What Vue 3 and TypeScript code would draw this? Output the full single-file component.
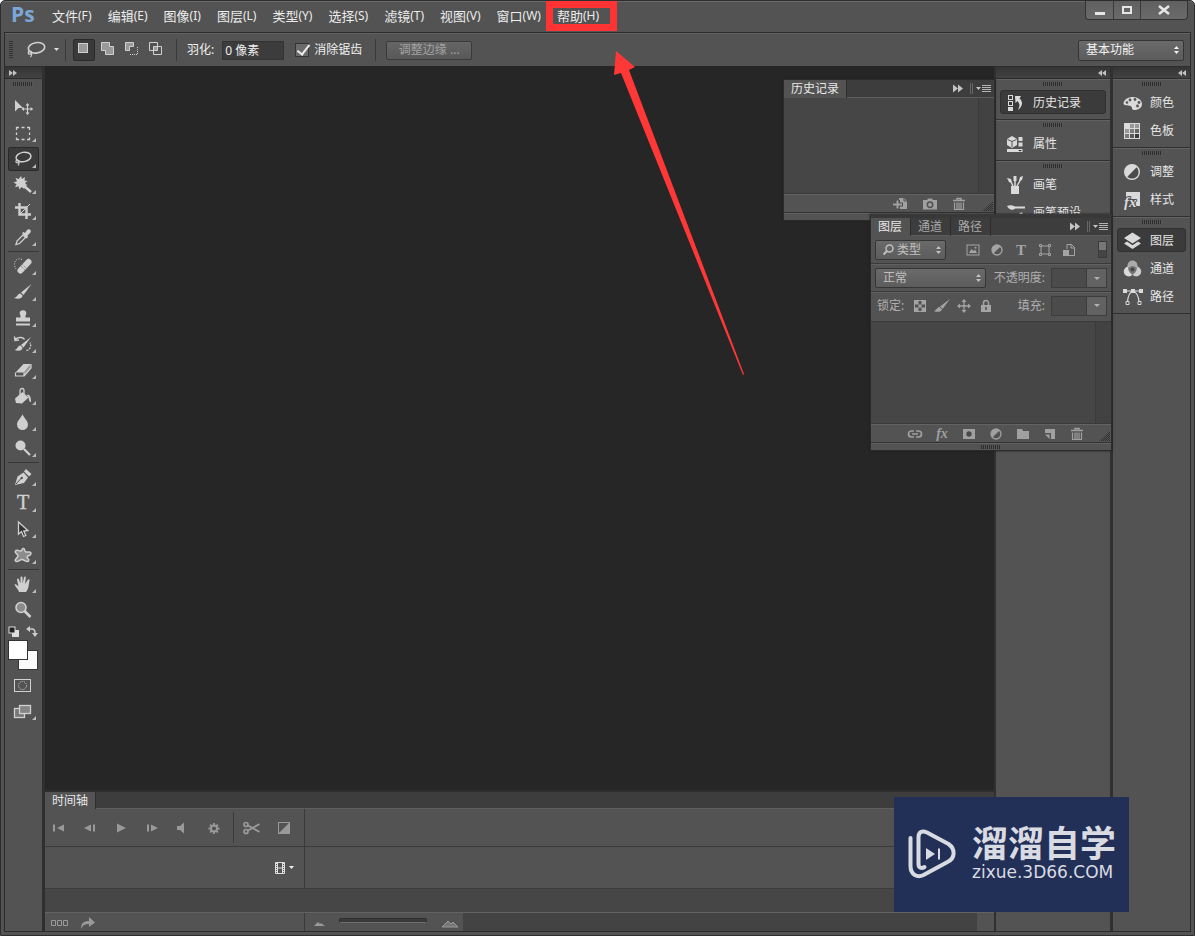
<script setup lang="ts">
import { ref } from 'vue'

interface Tool { id: string; label: string; flyout: boolean }
interface Entry { icon: string; label: string }

const menus: [string, string][] = [
  ['文件', 'F'], ['编辑', 'E'], ['图像', 'I'], ['图层', 'L'], ['类型', 'Y'],
  ['选择', 'S'], ['滤镜', 'T'], ['视图', 'V'], ['窗口', 'W'], ['帮助', 'H'],
]

const t = (id: string, label: string, flyout = true): Tool => ({ id, label, flyout })
const toolGroups: Tool[][] = [
  [t('move', '移动', false), t('marquee', '选框'), t('lasso', '套索'), t('wand', '魔棒'), t('crop', '裁剪'), t('eyedropper', '吸管')],
  [t('heal', '修复'), t('brush', '画笔'), t('stamp', '图章'), t('historyBrush', '历史画笔'), t('eraser', '橡皮擦'), t('bucket', '油漆桶'), t('blur', '模糊'), t('dodge', '减淡')],
  [t('pen', '钢笔'), t('type', '文字'), t('pathSelect', '路径选择'), t('shape', '形状')],
  [t('hand', '抓手'), t('zoom', '缩放', false)],
]

const innerDock: Entry[][] = [
  [{ icon: 'dHistory', label: '历史记录' }],
  [{ icon: 'dProps', label: '属性' }],
  [{ icon: 'dBrushes', label: '画笔' }, { icon: 'dPresets', label: '画笔预设' }],
]
const outerDock: Entry[][] = [
  [{ icon: 'dColor', label: '颜色' }, { icon: 'dSwatches', label: '色板' }],
  [{ icon: 'dAdjust', label: '调整' }, { icon: 'dStyles', label: '样式' }],
  [{ icon: 'dLayers', label: '图层' }, { icon: 'dChannels', label: '通道' }, { icon: 'dPaths', label: '路径' }],
]
const selectionModes = ['modeNew', 'modeAdd', 'modeSub', 'modeInt']
const historyFooter = ['docNew', 'camera', 'trash']
const layerFooter = ['link', 'fx', 'mask', 'adjust', 'folder', 'newLayer', 'trash']
const filterIcons = ['image', 'adjust', 'typeSmall', 'shapeSmall', 'smart']
const lockIcons = ['checker', 'brushSmall', 'moveSmall', 'lock']
const transport = ['first', 'prev', 'play', 'next', 'sound', 'gear']

const feather = ref('0 像素')
const antialias = ref(true)
const activeTool = ref('lasso')
const activeMode = ref('modeNew')
const zoomLevel = ref(0)

const trash = '<path d="M2 4.500h12M6 4V2.500h4V4" fill="none" stroke="currentColor" stroke-width="1.500"/><path d="M3.500 6.500v7h9v-7M6 6.500v7M8 6.500v7M10 6.500v7" fill="none" stroke="currentColor" stroke-width="1.200"/>'
const adjust = '<circle cx="8" cy="8" r="5" fill="none" stroke="currentColor" stroke-width="1.300"/><path d="M4.400 11.600A5 5 0 0 1 11.600 4.400z" fill="currentColor"/>'

/* Tool drawings use a 20-unit box, the others a 16-unit or 20-unit box. */
const icons: Record<string, string> = {
  move: '<path d="M2 3v11.500l3.500-3.500H10z" fill="currentColor"/><path d="M14.500 7v10M9.500 12h10" stroke="currentColor" stroke-width="1.200"/><path d="M14.500 6l2 2.500h-4zM14.500 18l2-2.500h-4zM8.500 12l2.500-2v4zM20 12l-2.500-2v4z" fill="currentColor"/>',
  marquee: '<path d="M3.500 7V4.500H6M8.500 4.500h3M14 4.500h2.500V7M16.500 9.500v2.500M16.500 14.500v2H14M11.500 16.500h-3M6 16.500H3.500v-2M3.500 12V9.500" fill="none" stroke="currentColor" stroke-width="1.300"/>',
  lasso: '<ellipse cx="10.500" cy="8" rx="7.500" ry="4.700" transform="rotate(-10 10.500 8)" fill="none" stroke="currentColor" stroke-width="1.500"/><path d="M4 11c-2 1-1 3.500 1 2.500s1-2.500-1-2.500c2 1 3 3 1 5.500" fill="none" stroke="currentColor" stroke-width="1.200"/>',
  wand: '<path d="M10 10l8 7" stroke="currentColor" stroke-width="2.500"/><path d="M8 1l1 3 3-2-.5 3.500 3 .5-2.500 2 2.500 2.500-3.500.2.500 3.300-3-2-2 2.500-1-3.200-3.500 1 1.500-3L.5 7.500l3.500-1.200L2.500 3l3.300 1z" fill="currentColor"/>',
  crop: '<path d="M6.500 2v11.500H18M2 6.500h11.500V18" fill="none" stroke="currentColor" stroke-width="2.400"/><path d="M6 14L17 3" stroke="currentColor" stroke-width="1"/>',
  eyedropper: '<path d="M3 17.500l1-3.500 6-6 2.500 2.500-6 6z" fill="none" stroke="currentColor" stroke-width="1.300"/><path d="M9 6l1.500-1 1.500 1 2-3c2-2 5 0 3.500 2.500l-3 3 .5 1.500-1.500 1.500z" fill="currentColor"/>',
  heal: '<path d="M7.500 14.500L15.500 6" stroke="currentColor" stroke-width="6" stroke-linecap="round"/><path d="M9.500 8.500l4 4M8 10l4 4" stroke="#777" stroke-dasharray="1 1"/><path d="M9 3.500C5 1.500 1.500 4 1.500 8.500c0 2 .500 3 1.500 4.500" fill="none" stroke="currentColor" stroke-dasharray="1 1.500"/>',
  brush: '<path d="M18.500 2L8 10.500l2.500 2.500z" fill="currentColor"/><path d="M7.500 11.500c-3 0-3 3.500-6.500 4.500 3.500 1.500 8.500 1 8.500-2.500z" fill="currentColor"/>',
  stamp: '<path d="M7.500 9.500c.5-2-.8-2.500-.8-4a3.300 3.300 0 0 1 6.600 0c0 1.500-1.300 2-.8 4H17v4H3v-4z" fill="currentColor"/><path d="M3 16.500h14" stroke="currentColor" stroke-width="2"/>',
  historyBrush: '<path d="M18 3L8 11l2.500 2.500z" fill="currentColor"/><path d="M7.500 11.500c-3 0-2.500 3.500-6 4.500 3.500 1.500 8 1 8-2.500z" fill="currentColor"/><path d="M2.500 5c4-2.500 8-1.500 9 .500M1.500 2.500L2 6.500 6 6" fill="none" stroke="currentColor" stroke-width="1.500"/><path d="M13.500 16.500c4-1 5-5 3.500-8" fill="none" stroke="currentColor" stroke-width="1.300" stroke-dasharray="2 1"/>',
  eraser: '<path d="M2.500 12.500L10.500 4H18l-7 8.500z" fill="currentColor"/><path d="M11 12.500L18 4v4l-7 8z" fill="#9a9a9a"/><path d="M2.500 12.500v3.500h8.500V12.500M18 4v4L11 16" fill="none" stroke="currentColor" stroke-width="1.200"/>',
  bucket: '<path d="M2 12.500L9.500 6l6 5.500L9 17.500 3 17z" fill="currentColor"/><path d="M7 11V4.500a2 2 0 0 1 4 0V9" fill="none" stroke="currentColor" stroke-width="1.300"/><path d="M13.500 8.500c4 0 4.500 3 4.500 7.500-2 0-2-2.500-2.500-4.500z" fill="currentColor"/>',
  blur: '<path d="M9.500 2c.500 3 5.500 6.500 5.500 10.500a5.500 5.500 0 0 1-11 0C4 8.500 9 5 9.500 2z" fill="currentColor"/>',
  dodge: '<circle cx="7.500" cy="7.500" r="5" fill="currentColor"/><path d="M11 11l6 6" stroke="currentColor" stroke-width="2.200"/>',
  pen: '<path d="M2 18l2.500-8.500 6-4 4.500 5-4 5.500z" fill="currentColor"/><path d="M11 4.500l2-2.500 5.500 5-2.500 2.500z" fill="currentColor"/><path d="M3 17l5-5.500" stroke="#505050"/><circle cx="8.700" cy="11" r="1.200" fill="#505050"/>',
  type: '<text x="10" y="16" text-anchor="middle" font-family="Liberation Serif, serif" font-size="20" fill="currentColor" stroke="currentColor" stroke-width=".4">T</text>',
  pathSelect: '<path d="M5.500 3v12l3-2.500 2 5 2.300-1-2-4.500 4-.500z" fill="#303030" stroke="currentColor" stroke-width="1.300"/>',
  shape: '<path d="M10 3.500c2.500-.5 1 3 3 3.500s5-1 5 1.500-4 2-4 3.500 3 2 1.500 4-4.500-1.500-6.500-1.500-5 3.500-6.500 1.500 3-3.500 2.500-5.500-4-2.500-2.500-4.500 4 .5 5.500 0 .5-2 2-2.500z" fill="#8c8c8c" stroke="currentColor" stroke-width="1.500"/>',
  hand: '<path d="M6 18c-.5-3-4-5-4.500-7.500 1.500-1 2.500.500 4 2L4 5.500c0-1.500 1.500-1.500 2 0L7.500 9.500V3.500c0-1.500 2-1.500 2 0v6l1.500-6c.5-1.500 2-1 1.800.4L12 10l2.700-4c.8-1.300 2.200-.5 1.800.700-1 3.800-.5 7.800-3.500 11.300z" fill="currentColor"/>',
  zoom: '<circle cx="8" cy="7.500" r="5" fill="#8a8a8a" stroke="currentColor" stroke-width="1.600"/><path d="M11.500 11l6 6" stroke="currentColor" stroke-width="2.600"/>',
  quickMask: '<rect x="1.500" y="4.500" width="16" height="12" fill="none" stroke="currentColor"/><circle cx="9.500" cy="10.500" r="4" fill="none" stroke="currentColor" stroke-dasharray="1 1"/>',
  screen: '<rect x="1.500" y="7.500" width="10" height="9" fill="#777" stroke="currentColor" stroke-width="1.300"/><rect x="6.500" y="4.500" width="11" height="8" fill="#858585" stroke="currentColor" stroke-width="1.300"/>',
  modeNew: '<rect x="2.500" y="2.500" width="9" height="9" fill="#999" stroke="currentColor"/>',
  modeAdd: '<path d="M1.500 1.500h8v4h4v8h-8v-4h-4z" fill="#999" stroke="currentColor"/>',
  modeSub: '<path d="M1.500 1.500h8v4h-4v4h-4z" fill="#999" stroke="currentColor"/><path d="M6 13.500h7.500V6" fill="none" stroke="currentColor" stroke-dasharray="1 1"/>',
  modeInt: '<path d="M1.500 1.500h8v8h-8zM5.500 5.500h8v8h-8z" fill="none" stroke="currentColor"/><rect x="6" y="6" width="3" height="3" fill="#999"/>',
  dHistory: '<rect x="2.500" y="2.500" width="4" height="4" fill="none" stroke="currentColor"/><rect x="2.500" y="8.500" width="4" height="4" fill="none" stroke="currentColor"/><rect x="2" y="14" width="5" height="4" fill="currentColor"/><path d="M9 3h6l-1.500 2.500c4 3 3 8-1.500 11.500 2-4 2-6-.5-9L9.500 10z" fill="currentColor"/>',
  dProps: '<path d="M1 5l5-3 5 3v6l-5 3-5-3z" fill="currentColor"/><path d="M1.500 5.500l4.500 2 4.500-2M6 7.500V13" fill="none" stroke="#555"/><path d="M12.500 3h4v4h-4zM12.500 8.500h4v4h-4zM1 15h15.500v3H1z" fill="currentColor"/><path d="M12 16h4l-2 1.500z" fill="#333"/>',
  dBrushes: '<path d="M5 11h8v8H5z" fill="currentColor"/><path d="M7 11L4 5M9 11V4M11 11l4-7" stroke="currentColor" stroke-width="1.500"/><path d="M1 3l4 1 1 4-3-1zM7.500 1h3v5h-3zM13 6l1-4 3-1-1 4z" fill="currentColor"/>',
  dPresets: '<path d="M1 3c4-2 8 0 9 1.500C7 8.500 3 7 1 3z" fill="currentColor"/><path d="M9 4.500h10M8 13.500h10" stroke="currentColor" stroke-width="2"/><path d="M11 12l5-3 1 3z" fill="currentColor"/>',
  dColor: '<path d="M.500 10c1-4 5-6 9.500-6s9 3 9 7-4 6-8 6c-3 0-1-3-3.500-4S0 13 .500 10z" fill="currentColor"/><g fill="#555"><circle cx="7" cy="7" r="1.400"/><circle cx="12" cy="6.500" r="1.400"/><circle cx="16" cy="9.500" r="1.400"/><circle cx="14.500" cy="13" r="1.400"/><circle cx="4" cy="9.500" r="1.300"/></g>',
  dSwatches: '<path d="M1 2h16v16H1z" fill="#999"/><path d="M2 3h4v4H2z" fill="#ddd"/><path d="M7 8h4v4H7zM2 13h4v4H2z" fill="#7a7a7a"/><path d="M12 8h4v4h-4z" fill="#666"/><path d="M7 13h4v4H7z" fill="#5a5a5a"/><path d="M12 13h4v4h-4z" fill="#3a3a3a"/><path d="M6.500 2v16M11.500 2v16M1 7.500h16M1 12.500h16" stroke="currentColor"/><rect x="1.500" y="2.500" width="15" height="15" fill="none" stroke="currentColor"/>',
  dAdjust: '<circle cx="9" cy="10" r="7.300" fill="#4b4b4b" stroke="currentColor" stroke-width="1.400"/><path d="M3.800 15.200A7.300 7.300 0 0 1 14.200 4.800z" fill="currentColor"/>',
  dStyles: '<path d="M3 2h14v14h-4l-1-7H3z" fill="currentColor"/><text x="1" y="17" font-family="Liberation Serif, serif" font-style="italic" font-weight="bold" font-size="15" fill="currentColor" stroke="#505050" stroke-width="2" paint-order="stroke">fx</text>',
  dLayers: '<path d="M9.500 1.500L18 7l-8.500 5.500L1 7z" fill="currentColor"/><path d="M1 12.500l3-2 5.500 3.800 5.500-3.800 3 2L9.500 18z" fill="currentColor"/>',
  dChannels: '<circle cx="9.500" cy="6.500" r="5" fill="#aaa"/><circle cx="5.800" cy="12.500" r="5" fill="currentColor"/><circle cx="13.200" cy="12.500" r="5" fill="#ccc"/><path d="M5 8.500c3-2 6-2 9 0 0 3-2 5.500-4.500 7.500C7 14 5 11.500 5 8.500z" fill="#777"/><circle cx="9.500" cy="10.500" r="2" fill="#444"/>',
  dPaths: '<path d="M1 4h18M4.500 15C5 8 7 5 10 4c3 1 5.500 4 6 11" fill="none" stroke="currentColor" stroke-width="1.200"/><path d="M0 2h4v4H0zM8 2h4v4H8zM16 2h4v4h-4z" fill="currentColor"/><path d="M3 14.500h3v3H3zM15 14.500h3v3h-3z" fill="#505050" stroke="currentColor"/>',
  link: '<path d="M7 5H4.500a3 3 0 0 0 0 6H7M9 5h2.500a3 3 0 0 1 0 6H9M5 8h6" fill="none" stroke="currentColor" stroke-width="1.700"/>',
  fx: '<text x="8" y="12" text-anchor="middle" font-family="Liberation Serif, serif" font-style="italic" font-weight="bold" font-size="14" fill="currentColor">fx</text>',
  mask: '<path d="M2 3h12v10H2z" fill="currentColor"/><circle cx="8" cy="8" r="2.700" fill="#4a4a4a"/>',
  adjust, trash,
  folder: '<path d="M2 3h5l1 2h6v8H2z" fill="currentColor"/>',
  newLayer: '<path d="M3 3h10v10H9V7H3z" fill="currentColor"/><path d="M3 8.500h4.500V13z" fill="currentColor"/>',
  image: '<rect x="2" y="3" width="12" height="10" fill="none" stroke="currentColor"/><path d="M4 11l2.500-4 2 2 1.500-1.500L12 11z" fill="currentColor"/><circle cx="10.500" cy="5.700" r="1" fill="currentColor"/>',
  typeSmall: '<text x="8" y="13" text-anchor="middle" font-family="Liberation Serif, serif" font-weight="bold" font-size="15" fill="currentColor">T</text>',
  shapeSmall: '<path d="M4 4h8v8H4z" fill="none" stroke="currentColor"/><path d="M2.500 2.500h2v2h-2zM11.500 2.500h2v2h-2zM2.500 11.500h2v2h-2zM11.500 11.500h2v2h-2z" fill="#505050" stroke="currentColor"/>',
  smart: '<path d="M6 7V2.500h4.500L13.500 5.500v8H8" fill="none" stroke="currentColor"/><path d="M10 2v4h4" fill="none" stroke="currentColor"/><path d="M2 8h6v6H2z" fill="currentColor"/>',
  checker: '<rect x="2.500" y="2.500" width="11" height="11" fill="none" stroke="currentColor"/><path d="M3 3h3.500v3.500H3zM9.500 3H13v3.500H9.500zM6.500 6.500h3v3h-3zM3 9.500h3.500V13H3zM9.500 9.500H13V13H9.500z" fill="currentColor"/>',
  brushSmall: '<path d="M16 1L6 8.500 8.500 11z" fill="currentColor"/><path d="M5.500 9C3 9 3 12 0 13c3 1.500 7.500 1 8-1.500z" fill="currentColor"/>',
  moveSmall: '<path d="M8 3v10M3 8h10" stroke="currentColor" stroke-width="1.300"/><path d="M8 1l2.500 3h-5zM8 15l2.500-3h-5zM1 8l3-2.500v5zM15 8l-3-2.500v5z" fill="currentColor"/>',
  lock: '<path d="M3 7h10v7H3z" fill="currentColor"/><path d="M5.500 7V5a2.500 2.500 0 0 1 5 0v2" fill="none" stroke="currentColor" stroke-width="1.500"/><path d="M8 9v3" stroke="#505050" stroke-width="1.500"/>',
  docNew: '<path d="M6 2h5l3 3v8H6z" fill="currentColor"/><path d="M11 2v3h3" fill="none" stroke="#505050"/><path d="M0 8.500h10M5 4v9" stroke="#505050" stroke-width="4"/><path d="M0 8.500h9M4.500 4.500v8" stroke="currentColor" stroke-width="2"/>',
  camera: '<path d="M1 4h4l1-1.500h4L11 4h4v9.500H1z" fill="currentColor"/><circle cx="8" cy="8.700" r="2.700" fill="none" stroke="#505050" stroke-width="1.500"/>',
  first: '<path d="M3 4.500v7" stroke="currentColor" stroke-width="2"/><path d="M13 4.500v7L6 8z" fill="currentColor"/>',
  prev: '<path d="M9 4.500v7L2 8z" fill="currentColor"/><path d="M12 4.500v7" stroke="currentColor" stroke-width="2"/>',
  play: '<path d="M4 3.500v9L13 8z" fill="currentColor"/>',
  next: '<path d="M4 4.500v7" stroke="currentColor" stroke-width="2"/><path d="M7 4.500v7L14 8z" fill="currentColor"/>',
  sound: '<path d="M2 6h3l4-3.500v11L5 10H2z" fill="currentColor"/>',
  gear: '<circle cx="8" cy="8.500" r="3" fill="none" stroke="currentColor" stroke-width="1.800"/><path d="M8 3v2M8 12v2M2.500 8.500h2M11.500 8.500h2M4.100 4.600l1.400 1.400M10.500 11l1.400 1.400M4.100 12.400L5.500 11M10.500 6l1.400-1.400" stroke="currentColor" stroke-width="1.800"/>',
  scissors: '<circle cx="3" cy="4.500" r="2" fill="none" stroke="currentColor" stroke-width="1.700"/><circle cx="3" cy="11.500" r="2" fill="none" stroke="currentColor" stroke-width="1.700"/><path d="M5 5.500l11.500 6.500M5 10.500L16.500 4" stroke="currentColor" stroke-width="1.800"/>',
  transition: '<rect x="2.500" y="2.500" width="11" height="11" fill="none" stroke="currentColor"/><path d="M13 3v10H3z" fill="currentColor"/>',
  film: '<path d="M3.500 2.500h9v11h-9zM5.500 3v10M10.500 3v10M5.500 8h5" fill="none" stroke="currentColor"/><path d="M4.500 3v10M11.500 3v10" stroke="currentColor" stroke-dasharray="1 1"/>',
}
</script>

<template>
  <div class="window">
    <header class="titlebar">
      <span class="logo">Ps</span>
      <nav class="menus">
        <button v-for="[name, key] in menus" :key="key" class="menu" type="button">
          {{ name }}<span class="mnemonic">({{ key }})</span>
          <i v-if="key === 'H'" class="highlight"></i>
        </button>
      </nav>
      <div class="winbuttons">
        <button type="button" aria-label="最小化"><svg width="12" height="12"><path d="M1 8h10v3H1z" fill="#e6e6e6" /></svg></button>
        <button type="button" aria-label="最大化"><svg width="12" height="12"><rect x="2" y="3" width="8" height="6" fill="none" stroke="#e6e6e6" stroke-width="2" /></svg></button>
        <button type="button" class="close" aria-label="关闭"><svg width="12" height="12"><path d="M1 2l10 8M11 2L1 10" stroke="#e6e6e6" stroke-width="2.500" /></svg></button>
      </div>
    </header>

    <div class="shell">
      <section class="options">
        <i class="vgrip"></i>
        <button class="current" type="button" aria-label="当前工具">
          <svg width="22" height="22" viewBox="0 0 20 20" v-html="icons.lasso"></svg>
          <svg class="caret" width="7" height="4"><path d="M1 0h5L3.500 3z" fill="#e0e0e0" /></svg>
        </button>
        <i class="bar"></i>
        <div class="modes">
          <button v-for="m in selectionModes" :key="m" type="button" :aria-label="m" :class="{ on: m === activeMode }" @click="activeMode = m">
            <svg width="15" height="15" v-html="icons[m]"></svg>
          </button>
        </div>
        <i class="bar"></i>
        <label class="feather">羽化: <input v-model="feather" type="text" /></label>
        <label class="check"><input v-model="antialias" type="checkbox" />消除锯齿</label>
        <i class="bar"></i>
        <button class="refine" type="button" disabled>调整边缘 ...</button>
        <div class="select workspace-select">
          <select aria-label="工作区"><option>基本功能</option></select>
          <svg width="5" height="8"><path d="M2.500 0L5 3H0zM2.500 8L5 5H0z" fill="currentColor" /></svg>
        </div>
      </section>

      <main class="workspace">
        <aside class="tools">
          <div class="dockhead left"><svg width="8" height="6"><path d="M0 0v6l4-3zM4 0v6l4-3z" fill="#c0c0c0" /></svg></div>
          <i class="grip"></i>
          <div v-for="(group, gi) in toolGroups" :key="gi" class="toolgroup">
            <button v-for="tool in group" :key="tool.id" type="button" class="tool" :class="{ on: tool.id === activeTool }" :aria-label="tool.label" @click="activeTool = tool.id">
              <svg width="20" height="20" v-html="icons[tool.id]"></svg>
              <i v-if="tool.flyout" class="corner"></i>
            </button>
          </div>
          <div class="miniswatches">
            <svg width="11" height="11"><rect x="4" y="4" width="7" height="7" fill="#ddd" /><rect x="1" y="1" width="6" height="6" fill="#222" stroke="#ddd" /></svg>
            <svg width="12" height="11"><path d="M3 3h3q3 0 3 4" fill="none" stroke="#ccc" stroke-width="1.500" /><path d="M4 0v6L0 3zM6 7h6l-3 4z" fill="#ccc" /></svg>
          </div>
          <svg class="colors" width="31" height="33"><rect x="10.500" y="11.500" width="19" height="19" fill="#fafafa" stroke="#333" /><rect x=".5" y="1.500" width="19" height="19" fill="#fff" stroke="#333" /></svg>
          <div class="toolmodes">
            <button class="tool" type="button" aria-label="快速蒙版"><svg width="20" height="20" v-html="icons.quickMask"></svg></button>
            <button class="tool" type="button" aria-label="屏幕模式"><svg width="20" height="20" v-html="icons.screen"></svg><i class="corner"></i></button>
          </div>
        </aside>

        <div class="center">
          <div class="canvas"></div>
          <section class="timeline">
            <div class="tabs">
              <button class="tab on" type="button">时间轴</button>
              <span class="panelmenu"><svg width="15" height="10"><path d="M0 3h5L2.500 6z" fill="#bbb" /><path d="M6 3.500h9M6 5.500h9M6 7.500h9" stroke="#bbb" /></svg></span>
            </div>
            <div class="trow controls">
              <div class="side">
                <div class="transport">
                  <button v-for="b in transport" :key="b" type="button" :aria-label="b"><svg width="16" height="16" v-html="icons[b]"></svg></button>
                </div>
                <div class="edit">
                  <button type="button" aria-label="拆分"><svg width="17" height="16" v-html="icons.scissors"></svg></button>
                  <button type="button" aria-label="过渡"><svg width="16" height="16" v-html="icons.transition"></svg></button>
                </div>
              </div>
            </div>
            <div class="trow media">
              <div class="side">
                <button type="button" aria-label="添加媒体"><svg width="16" height="16" v-html="icons.film"></svg><svg width="7" height="4"><path d="M1 0h5L3.500 3z" fill="#eee" /></svg></button>
              </div>
            </div>
            <div class="tempty"></div>
            <div class="tfoot">
              <div class="side">
                <svg width="18" height="7"><path d="M.5.500h4v5h-4zM6.500.500h4v5h-4zM12.500.500h4v5h-4z" fill="none" stroke="#9a9a9a" /></svg>
                <svg width="14" height="12"><path d="M0 12C0 6 3 4 8 4V0l6 5.500L8 10V7C4 7 2 8 0 12z" fill="#9a9a9a" /></svg>
              </div>
              <div class="zoombar">
                <svg width="11" height="6"><path d="M0 6l4-4 2 2 1-1 4 3z" fill="#9a9a9a" /></svg>
                <input v-model="zoomLevel" type="range" aria-label="时间轴缩放" />
                <svg width="18" height="9"><path d="M1 8l6-6 3 3 2-2 5 5z" fill="#777" stroke="#9a9a9a" /></svg>
              </div>
              <div class="hscroll"></div>
            </div>
          </section>
        </div>

        <aside class="dock inner">
          <div class="dockhead"><svg width="8" height="6"><path d="M4 0v6L0 3zM8 0v6L4 3z" fill="#c0c0c0" /></svg></div>
          <div v-for="(group, gi) in innerDock" :key="gi" class="dockgroup">
            <i class="grip"></i>
            <button v-for="e in group" :key="e.label" type="button" class="entry" :class="{ on: e.label === '历史记录' }">
              <svg width="20" height="20" v-html="icons[e.icon]"></svg>{{ e.label }}
            </button>
          </div>
        </aside>
        <aside class="dock outer">
          <div class="dockhead"><svg width="8" height="6"><path d="M4 0v6L0 3zM8 0v6L4 3z" fill="#c0c0c0" /></svg></div>
          <div v-for="(group, gi) in outerDock" :key="gi" class="dockgroup">
            <i class="grip"></i>
            <button v-for="e in group" :key="e.label" type="button" class="entry" :class="{ on: e.label === '图层' }">
              <svg width="20" height="20" v-html="icons[e.icon]"></svg>{{ e.label }}
            </button>
          </div>
        </aside>

        <section class="panel history">
          <div class="tabs">
            <button class="tab on" type="button">历史记录</button>
            <span class="panelmenu">
              <svg width="38" height="11"><path d="M0 1.500v8l5-4zM5 1.500v8l5-4z" fill="#c4c4c4" /><path d="M17.500 0v11M19.500 0v11" stroke="#666" /><path d="M23 4h5l-2.500 3z" fill="#c4c4c4" /><path d="M29 2.500h9M29 4.500h9M29 6.500h9M29 8.500h9" stroke="#b4b4b4" /></svg>
            </span>
          </div>
          <div class="body"><i class="scroll"></i></div>
          <div class="foot">
            <button v-for="b in historyFooter" :key="b" type="button" :aria-label="b"><svg width="16" height="16" v-html="icons[b]"></svg></button>
            <i class="resize"></i>
          </div>
          <div class="strip"></div>
        </section>

        <section class="panel layers">
          <div class="tabs">
            <button class="tab on" type="button">图层</button>
            <button class="tab" type="button">通道</button>
            <button class="tab" type="button">路径</button>
            <span class="panelmenu">
              <svg width="38" height="11"><path d="M0 1.500v8l5-4zM5 1.500v8l5-4z" fill="#c4c4c4" /><path d="M17.500 0v11M19.500 0v11" stroke="#666" /><path d="M23 4h5l-2.500 3z" fill="#c4c4c4" /><path d="M29 2.500h9M29 4.500h9M29 6.500h9M29 8.500h9" stroke="#b4b4b4" /></svg>
            </span>
          </div>
          <div class="prow">
            <div class="select kind">
              <svg class="search" width="11" height="11"><circle cx="6.500" cy="4.500" r="3.500" fill="none" stroke="currentColor" stroke-width="1.500" /><path d="M4 7l-3.500 3.500" stroke="currentColor" stroke-width="2" /></svg>
              <select aria-label="筛选类型"><option>类型</option></select>
              <svg width="5" height="8"><path d="M2.500 0L5 3H0zM2.500 8L5 5H0z" fill="currentColor" /></svg>
            </div>
            <div class="filters">
              <button v-for="b in filterIcons" :key="b" type="button" :aria-label="b"><svg width="16" height="16" v-html="icons[b]"></svg></button>
            </div>
            <button class="toggle" type="button" aria-label="筛选开关"></button>
          </div>
          <div class="prow">
            <div class="select blend">
              <select aria-label="混合模式"><option>正常</option></select>
              <svg width="5" height="8"><path d="M2.500 0L5 3H0zM2.500 8L5 5H0z" fill="currentColor" /></svg>
            </div>
            <label class="amount">不透明度:<input type="text" /><i></i></label>
          </div>
          <div class="prow last">
            <span>锁定:</span>
            <div class="locks">
              <button v-for="b in lockIcons" :key="b" type="button" :aria-label="b"><svg width="16" height="16" v-html="icons[b]"></svg></button>
            </div>
            <label class="amount">填充:<input type="text" /><i></i></label>
          </div>
          <div class="body"><i class="scroll"></i></div>
          <div class="foot">
            <button v-for="b in layerFooter" :key="b" type="button" :aria-label="b"><svg width="16" height="16" v-html="icons[b]"></svg></button>
            <i class="resize"></i>
          </div>
          <div class="strip"><i class="grip"></i></div>
        </section>
      </main>
    </div>

    <svg class="arrow" width="136" height="328"><path d="M6 1L25 17l-6 3 115 304-1 1L11 23l-7 2z" fill="#fe3737" /></svg>

    <div class="watermark">
      <svg width="50" height="52" viewBox="0 0 50 52">
        <path d="M3.500 9v28c0 9 7 12 13 9l24-13c8-4 8-13 1-18L20 3.500C15 1 11.500 3 11.500 8v27c0 4 3 5 6 3" fill="none" stroke="#d9dbe2" stroke-width="4" stroke-linecap="round" stroke-linejoin="round" />
        <path d="M19 19v12l9-6z" fill="#d9dbe2" /><path d="M32 19.500v11" stroke="#d9dbe2" stroke-width="2" />
      </svg>
      <div class="brand"><strong>溜溜自学</strong><span>zixue.3D66.COM</span></div>
    </div>
  </div>
</template>

<style>
html, body { background: #fff; overflow: hidden; }
</style>

<style scoped>
* { box-sizing: border-box; }
button, input, select { font: inherit; color: inherit; margin: 0; padding: 0; border: 0; background: none; border-radius: 0; outline: none; }
button { display: flex; align-items: center; justify-content: center; white-space: nowrap; }
select { appearance: none; }
svg { display: block; flex: none; overflow: visible; }
i { display: block; flex: none; font-style: normal; }

.window { position: relative; display: flex; flex-direction: column; height: 100vh; padding: 0 3px 3px; border: 1px solid #2e2e2e; border-radius: 5px 5px 0 0; background: #535353; color: #dedede; font: 12px/16px "Noto Sans", "Noto Sans CJK SC", sans-serif; box-shadow: inset 0 1px #6a6a6a; }

.titlebar { display: flex; flex: none; height: 31px; align-items: center; padding: 0 3px 2px 7px; }
.logo { width: 34px; padding-bottom: 3px; font: bold 21px/24px "Open Sans", sans-serif; color: #7ba7d8; }
.menus { display: flex; flex: 1; gap: 16px; padding-left: 7px; }
.menu { position: relative; font-size: 13px; line-height: 20px; color: #ececec; }
.mnemonic { font-size: 12px; }
.highlight { position: absolute; top: -5px; left: -11px; right: -18px; bottom: -5px; border: 7px solid #fe3333; }
.winbuttons { display: flex; align-self: flex-start; height: 19px; border: 1px solid #333; border-top: 0; border-radius: 0 0 4px 4px; background: linear-gradient(#606060, #6a6a6a); }
.winbuttons button { width: 27px; }
.winbuttons button + button { border-left: 1px solid #3a3a3a; }
.winbuttons .close { width: 47px; }

.shell { display: flex; flex: 1; flex-direction: column; min-height: 0; border: 1px solid #2c2c2c; }
.options { display: flex; flex: none; align-items: center; height: 33px; padding-right: 6px; border-top: 1px solid #646464; background: #535353; }
.vgrip { width: 4px; height: 18px; margin-left: 4px; background: repeating-linear-gradient(#333 0 1px, transparent 1px 2px); }
.current { gap: 6px; margin-left: 12px; padding-bottom: 1px; color: #d0d0d0; }
.bar { width: 1px; height: 22px; background: #3a3a3a; }
.current + .bar { margin-left: 5px; }
.modes { display: flex; gap: 2px; margin: 0 9px 0 7px; padding-bottom: 1px; color: #d0d0d0; }
.modes button { width: 22px; height: 22px; padding: 0 1px 2px 0; border: 1px solid transparent; border-radius: 2px; }
.modes .on { border-color: #2a2a2a; background: #3a3a3a; }
.feather { display: flex; align-items: center; gap: 8px; margin-left: 10px; color: #f0f0f0; }
.feather input { width: 62px; height: 19px; padding-left: 2px; border: 1px solid #333; background: #3c3c3c; }
.check { display: flex; align-items: center; gap: 5px; margin: 0 13px 0 11px; color: #f0f0f0; }
.check input { position: relative; width: 14px; height: 14px; appearance: none; border: 1px solid #353535; background: #6b6b6b; }
.check input:checked::after { content: ""; position: absolute; left: 4px; top: -2px; width: 5px; height: 11px; border: solid #eee; border-width: 0 2px 2px 0; transform: rotate(38deg); }
.refine { width: 86px; height: 19px; margin-left: 10px; border: 1px solid #3a3a3a; border-radius: 2px; background: linear-gradient(#666, #585858); color: #a2a2a2; }
.select { position: relative; display: flex; align-items: center; border: 1px solid #353535; border-radius: 2px; background: linear-gradient(#6a6a6a, #5c5c5c); }
.select select { flex: 1; min-width: 0; height: 18px; padding-left: 7px; }
.select > svg:last-child { margin-right: 4px; }
.workspace-select { width: 106px; height: 21px; margin-left: auto; color: #f2f2f2; }

.workspace { position: relative; display: flex; flex: 1; min-height: 0; }
.dockhead { display: flex; flex: none; align-items: center; justify-content: flex-end; height: 13px; padding-right: 4px; border-top: 1px solid #2c2c2c; border-bottom: 1px solid #2c2c2c; background: linear-gradient(#353535, #424242); }
.dockhead.left { justify-content: flex-start; padding-left: 4px; }
.grip { width: 20px; height: 4px; background: repeating-linear-gradient(90deg, #2d2d2d 0 1px, #565656 1px 2px); }

.tools { flex: none; width: 40px; border-right: 3px solid #2f2f2f; background: #535353; }
.tools .grip { margin: 3px 0 8px 8px; }
.toolgroup, .toolmodes { display: flex; flex-direction: column; }
.toolgroup + .toolgroup::before { content: ""; height: 1px; margin: 1px 3px; background: #383838; }
.tool { position: relative; justify-content: flex-start; width: 31px; height: 24px; margin: 1px 3px; padding-left: 4px; border: 1px solid transparent; border-radius: 2px; color: #d0d0d0; }
.tool.on { border-color: #2a2a2a; background: #3b3b3b; }
.tool .corner { position: absolute; right: 2px; bottom: 2px; border: 2px solid; border-color: transparent #bbb #bbb transparent; }
.miniswatches { display: flex; justify-content: space-between; align-items: center; height: 16px; padding: 0 4px 0 3px; }
.colors { margin-left: 3px; }

.center { display: flex; flex: 1; flex-direction: column; min-width: 0; }
.canvas { flex: 1; background: #262626; }
.timeline { flex: none; border-top: 2px solid #2e2e2e; background: #535353; color: #9a9a9a; }
.tabs { display: flex; height: 18px; background: #3d3d3d; border-bottom: 1px solid #5e5e5e; }
.tab { height: 18px; padding: 0 7px; border-right: 1px solid #2d2d2d; color: #a8a8a8; }
.tab.on { background: #535353; color: #e8e8e8; }
.panelmenu { display: flex; align-items: center; margin-left: auto; padding-right: 3px; }
.timeline .tabs { height: 17px; }
.timeline .tab { height: 17px; }
.trow { display: flex; border-bottom: 1px solid #3b3b3b; }
.side { display: flex; flex: none; width: 260px; border-right: 1px solid #3a3a3a; }
.controls { height: 38px; }
.media { height: 42px; }
.transport { display: flex; align-items: center; gap: 15px; margin: 3px 0; padding: 0 11px 0 6px; border-right: 1px solid #3a3a3a; }
.edit { display: flex; align-items: center; gap: 16px; padding-left: 9px; }
.media .side { justify-content: flex-end; padding-right: 9px; color: #e0e0e0; }
.tempty { height: 23px; background: #464646; }
.tfoot { display: flex; height: 19px; border-top: 1px solid #636363; }
.tfoot .side { align-items: center; gap: 12px; padding: 2px 0 0 6px; }
.zoombar { display: flex; align-items: center; gap: 14px; width: 158px; padding-left: 9px; }
.zoombar svg { margin-top: 2px; }
.zoombar input { width: 88px; height: 5px; appearance: none; margin-bottom: 3px; border-radius: 2px; border: 1px solid #303030; border-bottom-color: #6e6e6e; background: #3a3a3a; }
.zoombar input::-webkit-slider-thumb { appearance: none; width: 1px; height: 1px; }
.hscroll { flex: 1; margin-right: 17px; background: #434343; }

.dock { flex: none; background: #535353; color: #e6e6e6; }
.dock.inner { width: 116px; border-left: 2px solid #303030; }
.dock.outer { width: 80px; border-left: 3px solid #303030; }
.dockgroup { display: flex; flex-direction: column; gap: 4px; padding: 2px 4px 5px; border-top: 1px solid #626262; border-bottom: 1px solid #303030; }
.dockgroup .grip { align-self: center; }
.entry { justify-content: flex-start; gap: 7px; height: 24px; padding: 2px 0 0 5px; border: 1px solid transparent; border-radius: 3px; }
.entry svg { color: #dadada; }
.entry.on { border-color: #303030; background: #3b3b3b; }

.panel { position: absolute; display: flex; flex-direction: column; border: 1px solid #2c2c2c; background: #535353; color: #b0b0b0; box-shadow: 0 0 2px #1c1c1c; }
.history { top: 13px; right: 195px; width: 212px; height: 142px; }
.layers { top: 148px; right: 78px; width: 242px; height: 237px; border-top: 4px solid #383838; }
.panel .tabs { flex: none; }
.layers .tab { padding: 0 8px 0 7px; }
.body { display: flex; flex: 1; justify-content: flex-end; border-bottom: 1px solid #3a3a3a; background: #464646; }
.scroll { width: 16px; border-left: 1px solid #3a3a3a; background: #424242; }
.foot { position: relative; display: flex; flex: none; align-items: center; height: 19px; justify-content: flex-end; border-top: 1px solid #636363; border-bottom: 1px solid #333; color: #a0a0a0; }
.history .foot { gap: 13px; padding-right: 27px; }
.layers .foot { gap: 11px; padding-right: 26px; }
.resize { position: absolute; right: 1px; bottom: 1px; width: 11px; height: 10px; background: repeating-conic-gradient(#303030 0 25%, transparent 0 50%) 0 0 / 2px 2px; clip-path: polygon(100% 0, 100% 100%, 0 100%); }
.strip { display: flex; flex: none; height: 7px; justify-content: center; align-items: center; border-top: 1px solid #606060; }
.prow { display: flex; flex: none; align-items: center; height: 28px; padding: 0 4px; border-top: 1px solid #606060; border-bottom: 1px solid #3a3a3a; }
.prow.last { height: 30px; padding-bottom: 3px; padding-left: 6px; }
.tabs + .prow { border-top: 0; }
.kind { width: 71px; height: 20px; color: #c0c0c0; }
.kind .search { margin-left: 7px; }
.kind select { padding-left: 3px; }
.blend { width: 111px; height: 20px; color: #c0c0c0; }
.filters { display: flex; gap: 8px; margin-left: 19px; color: #a4a4a4; }
.toggle { width: 9px; height: 17px; margin-left: auto; border: 1px solid #3b3b3b; background: linear-gradient(#777 0 8px, #454545 8px); }
.locks { display: flex; gap: 6px; margin-left: 8px; color: #a4a4a4; }
.amount { display: flex; align-items: center; margin-left: auto; }
.amount input { width: 36px; height: 20px; margin-left: 6px; border: 1px solid #3c3c3c; background: #4b4b4b; }
.amount i { display: flex; align-items: center; justify-content: center; width: 20px; height: 20px; border: 1px solid #3c3c3c; border-left: 0; background: #626262; }
.amount i::after { content: ""; margin-top: 3px; border: 3px solid transparent; border-top-color: #b0b0b0; }

.arrow { position: absolute; left: 609px; top: 49px; pointer-events: none; }
.watermark { position: absolute; right: 65px; bottom: 23px; display: flex; align-items: center; gap: 15px; width: 235px; height: 115px; padding-left: 13px; background: #222f56; color: #d9dbe2; }
.brand { display: flex; flex-direction: column; padding-bottom: 4px; }
.brand strong { font: bold 36px/36px "Noto Sans CJK SC", sans-serif; }
.brand span { margin-top: 3px; font: 17px/20px "DejaVu Sans", sans-serif; }
</style>
